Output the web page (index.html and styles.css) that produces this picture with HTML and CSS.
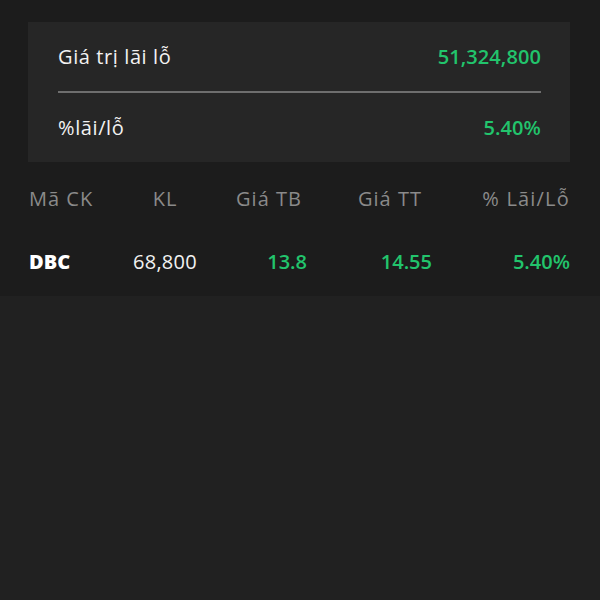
FILE: index.html
```html
<!DOCTYPE html>
<html lang="vi">
<head>
<meta charset="utf-8">
<link rel="stylesheet" href="styles.css">
</head>
<body>
<div class="top">
  <div class="card">
    <div class="card-row">
      <span class="label">Giá trị lãi lỗ</span>
      <span class="value">51,324,800</span>
    </div>
    <div class="divider"></div>
    <div class="card-row">
      <span class="label">%lãi/lỗ</span>
      <span class="value">5.40%</span>
    </div>
  </div>
  <div class="table">
    <div class="thead">
      <div class="c c1">Mã CK</div>
      <div class="c c2">KL</div>
      <div class="c c3">Giá TB</div>
      <div class="c c4">Giá TT</div>
      <div class="c c5">% Lãi/Lỗ</div>
    </div>
    <div class="trow">
      <div class="c c1 sym">DBC</div>
      <div class="c c2 vol">68,800</div>
      <div class="c c3 num">13.8</div>
      <div class="c c4 num">14.55</div>
      <div class="c c5 num">5.40%</div>
    </div>
  </div>
</div>
</body>
</html>
```
FILE: styles.css
```css
html, body {
  margin: 0;
  padding: 0;
  background: #212121;
  font-family: "Open Sans", "Noto Sans", sans-serif;
}
.top {
  background: #1c1c1c;
  padding: 22px 30px 0 28px;
  height: 274px;
}
.card {
  background: #262626;
  padding: 0 29px 0 30px;
}
.card-row {
  display: flex;
  justify-content: space-between;
  align-items: center;
  height: 69px;
}
.label {
  color: #f2f2f2;
  font-size: 20px;
  font-weight: 500;
  letter-spacing: 0.6px;
}
.value {
  color: #22c46c;
  font-size: 20px;
  font-weight: 600;
  letter-spacing: 0.1px;
}
.divider {
  height: 2px;
  background: #6e6e6e;
}
.table {
  padding-left: 1px;
}
.thead, .trow {
  display: grid;
  grid-template-columns: 81px 110px 98px 144px 1fr;
  align-items: center;
}
.thead {
  height: 72px;
  color: #8a8a8a;
  font-size: 20px;
  letter-spacing: 1px;
}
.thead .c5 { letter-spacing: 1.2px; }
.trow {
  height: 54px;
  font-size: 20px;
}
.c1 { text-align: left; }
.c2 { text-align: center; }
.c3 { text-align: center; }
.c4 { text-align: center; }
.c5 { text-align: right; }
.trow .c3 { text-align: right; padding-right: 11px; }
.trow .c4 { text-align: right; padding-right: 30px; }
.sym {
  color: #ffffff;
  font-weight: 800;
}
.vol {
  color: #f2f2f2;
  font-weight: 500;
  letter-spacing: 0.3px;
}
.num {
  color: #22c46c;
  font-weight: 600;
}
```
